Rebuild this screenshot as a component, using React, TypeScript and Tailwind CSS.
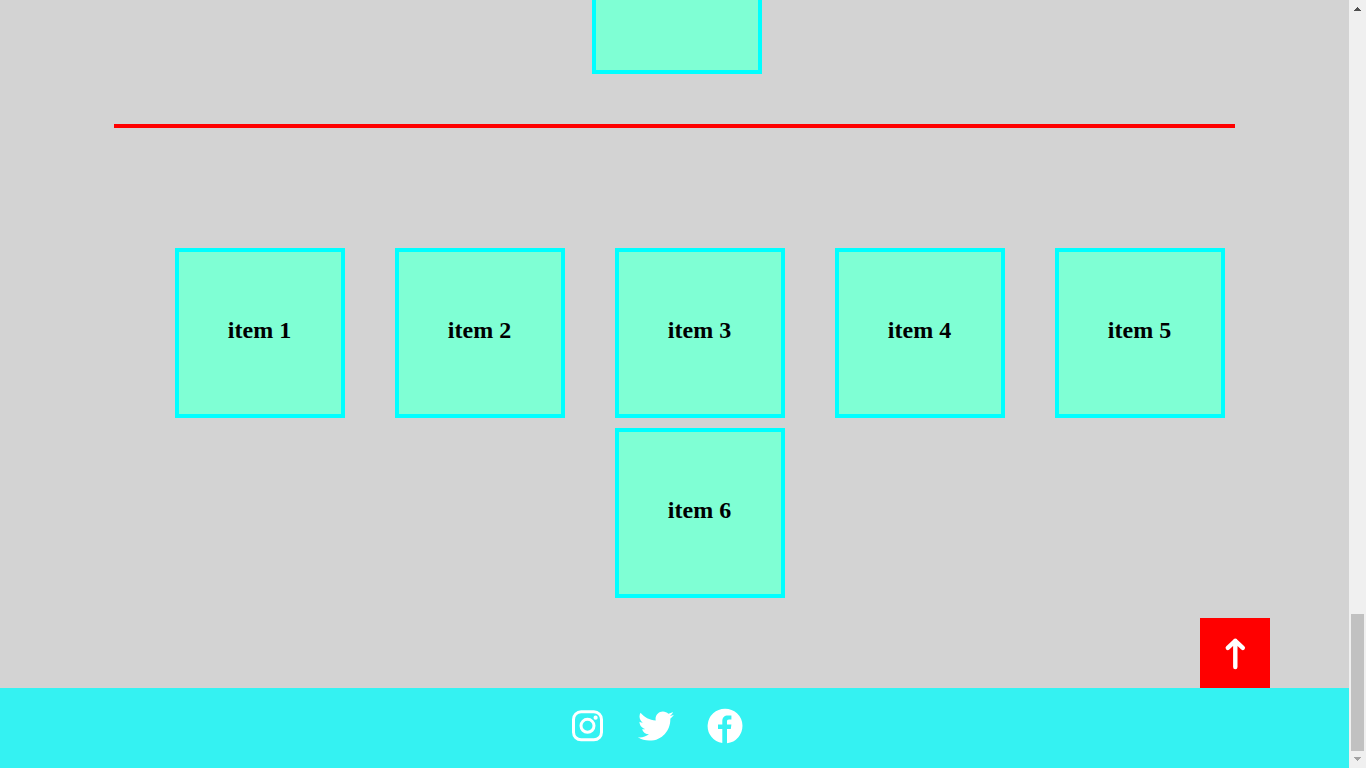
import { FaTwitter } from "react-icons/fa";

const items = ["item 1", "item 2", "item 3", "item 4", "item 5", "item 6"];

function InstagramIcon({ className }: { className?: string }) {
  return (
    <svg className={className} viewBox="0 0 36 36" fill="none" stroke="currentColor" strokeWidth="3">
      <rect x="4.5" y="3.8" width="28" height="28" rx="7.6" />
      <circle cx="18.5" cy="17.8" r="6.5" />
      <circle cx="26.6" cy="9.7" r="2.1" fill="currentColor" stroke="none" />
    </svg>
  );
}

function FacebookIcon({ className }: { className?: string }) {
  return (
    <svg className={className} viewBox="0 0 36 36" fill="currentColor">
      <path d="M18 .7A17.3 17.3 0 0 0 15.3 35.1V21H11V16.6h4.3V13.2c0-3.8 2.1-5.8 5.6-5.8h3.5v4.1H22c-1.6 0-2 .9-2 2.2v2.9h4.4L23.8 21H20v14.2A17.3 17.3 0 0 0 18 .7z" />
    </svg>
  );
}

const socials = [
  { label: "Instagram", Icon: InstagramIcon },
  { label: "Twitter", Icon: FaTwitter },
  { label: "Facebook", Icon: FacebookIcon },
];

function ScrollTrack() {
  return (
    <div aria-hidden="true" className="flex w-[17px] shrink-0 flex-col items-center bg-[#f0f0f0]">
      <svg className="h-[17px] w-[17px]" viewBox="0 0 17 17" shapeRendering="crispEdges">
        <path d="M8 7h1v1h1v1h1v1h1v1H5v-1h1V9h1V8h1z" fill="#505050" />
      </svg>
      <div className="grow" />
      <div className="h-[137px] w-[13px] bg-[#c1c1c1]" />
      <svg className="h-[17px] w-[17px]" viewBox="0 0 17 17" shapeRendering="crispEdges">
        <path d="M5 6h7v1h-1v1h-1v1H9v1H8V9H7V8H6V7H5z" fill="#a3a3a3" />
      </svg>
    </div>
  );
}

export default function App() {
  return (
    <div className="flex min-h-screen bg-[#d3d3d3] font-['Liberation_Serif',serif] text-black">
      <div className="flex min-w-0 grow flex-col">
        <main className="flex grow flex-col">
          <section className="flex justify-center pl-1">
            <div className="h-[74px] w-[170px] border-4 border-t-0 border-[#00ffff] bg-[#7fffd4]" />
          </section>

          <hr className="mx-[114px] mt-[50px] border-0 border-t-4 border-[#ff0000]" />

          <ul className="mx-[114px] mt-[120px] flex flex-wrap justify-center gap-x-[50px] gap-y-2.5 pl-[50px]">
            {items.map((item) => (
              <li
                key={item}
                className="flex h-[170px] w-[170px] items-center justify-center border-4 border-[#00ffff] bg-[#7fffd4] pb-1.5"
              >
                <h2 className="text-2xl font-bold">{item}</h2>
              </li>
            ))}
          </ul>

          <div className="mt-auto flex justify-end pt-5 pr-[79px]">
            <button
              type="button"
              aria-label="Back to top"
              className="flex h-[70px] w-[70px] items-center justify-center bg-[#ff0000]"
            >
              <svg
                className="h-9 w-9"
                viewBox="0 0 36 36"
                fill="none"
                stroke="#ffffff"
                strokeWidth="4.4"
                strokeLinecap="round"
                strokeLinejoin="round"
              >
                <path d="M18.3 32V5.8M10.8 12.9l7.5-7.1 7.5 7.1" />
              </svg>
            </button>
          </div>
        </main>

        <footer className="flex h-20 items-center justify-center gap-[33px] bg-[#34f2f2] pr-[37px] pb-1">
          {socials.map(({ label, Icon }) => (
            <a key={label} href="#" aria-label={label} className="text-white">
              <Icon className="h-9 w-9" />
            </a>
          ))}
        </footer>
      </div>
      <ScrollTrack />
    </div>
  );
}
